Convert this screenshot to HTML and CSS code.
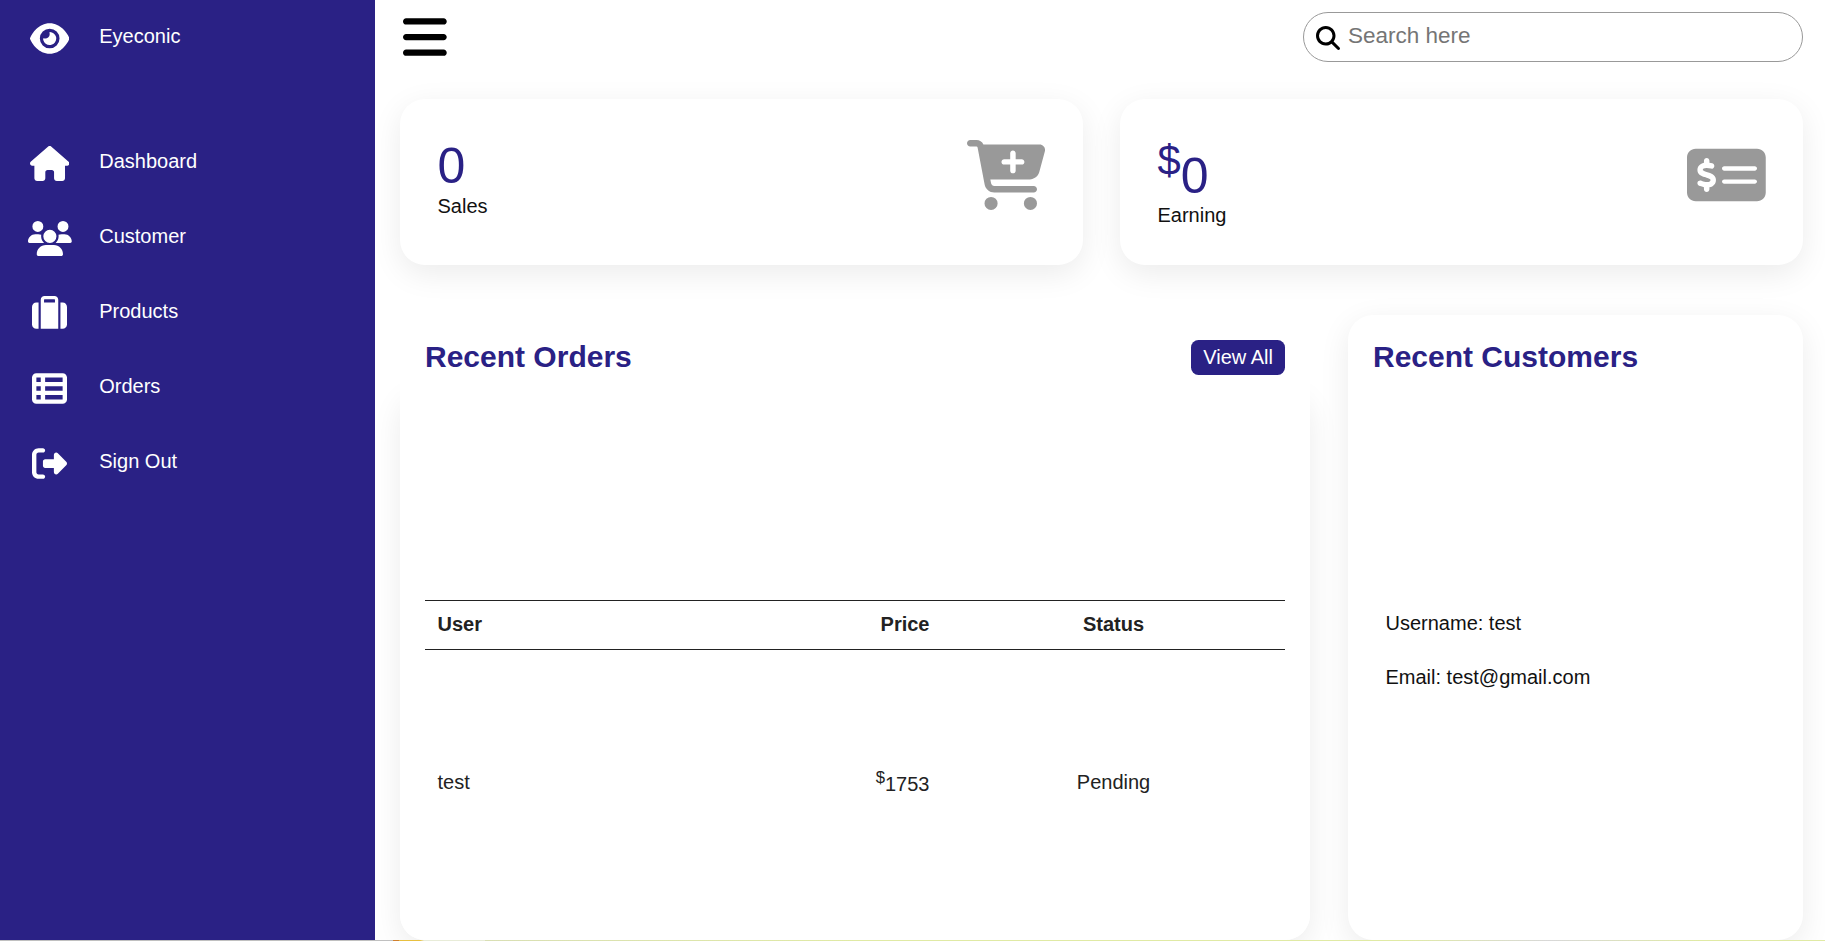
FILE: index.html
```
<!DOCTYPE html>
<html lang="en">
<head>
<meta charset="utf-8">
<title>Eyeconic</title>
<link rel="stylesheet" href="styles.css">
</head>
<body>
<div class="app">
  <nav class="sidebar">
    <a class="nav-item brand"><span class="nav-icon"><svg class="fa" viewBox="0 0 576 512" width="39.375" height="35"><path d="M288 32c-80.8 0-145.5 36.8-192.6 80.6C48.6 156 17.3 208 2.5 243.7c-3.3 7.9-3.3 16.7 0 24.6C17.3 304 48.6 356 95.4 399.4C142.5 443.2 207.2 480 288 480s145.5-36.8 192.6-80.6c46.8-43.5 78.1-95.4 93-131.1c3.3-7.9 3.3-16.7 0-24.6c-14.9-35.7-46.2-87.7-93-131.1C433.5 68.8 368.8 32 288 32zM144 256a144 144 0 1 1 288 0 144 144 0 1 1 -288 0zm144-64c0 35.3-28.7 64-64 64c-7.1 0-13.9-1.2-20.3-3.3c-5.5-1.8-11.9 1.6-11.7 7.4c.3 6.9 1.3 13.8 3.2 20.7c13.7 51.2 66.4 81.6 117.6 67.9s81.6-66.4 67.9-117.6c-11.1-41.5-47.8-69.4-88.6-71.1c-5.8-.2-9.2 6.1-7.4 11.7c2.1 6.4 3.3 13.2 3.3 20.3z"/></svg></span><span class="nav-title">Eyeconic</span></a>
    <a class="nav-item"><span class="nav-icon"><svg class="fa" viewBox="0 0 576 512" width="39.375" height="35"><path d="M575.8 255.5c0 18-15 32.1-32 32.1h-32l.7 160.2c0 2.7-.2 5.4-.5 8.1V472c0 22.1-17.9 40-40 40H456c-1.1 0-2.2 0-3.3-.1c-1.4 .1-2.8 .1-4.2 .1H416 392c-22.1 0-40-17.9-40-40V448 384c0-17.7-14.3-32-32-32H256c-17.7 0-32 14.3-32 32v64 24c0 22.1-17.9 40-40 40H160 128.1c-1.5 0-3-.1-4.5-.2c-1.2 .1-2.4 .2-3.6 .2H104c-22.1 0-40-17.9-40-40V360c0-.9 0-1.9 .1-2.8V287.6H32c-18 0-32-14-32-32.1c0-9 3-17 10-24L266.4 8c7-7 15-8 22-8s15 2 21 7L564.8 231.5c8 7 12 15 11 24z"/></svg></span><span class="nav-title">Dashboard</span></a>
    <a class="nav-item"><span class="nav-icon"><svg class="fa" viewBox="0 0 640 512" width="43.75" height="35"><path d="M144 0a80 80 0 1 1 0 160A80 80 0 1 1 144 0zM512 0a80 80 0 1 1 0 160A80 80 0 1 1 512 0zM0 298.7C0 239.8 47.8 192 106.7 192h42.7c15.9 0 31 3.5 44.6 9.7c-1.3 7.2-1.9 14.7-1.9 22.3c0 38.2 16.8 72.5 43.3 96c-.2 0-.4 0-.7 0H21.3C9.6 320 0 310.4 0 298.7zM405.3 320c-.2 0-.4 0-.7 0c26.6-23.5 43.3-57.8 43.3-96c0-7.6-.7-15-1.9-22.3c13.6-6.3 28.7-9.7 44.6-9.7h42.7C592.2 192 640 239.8 640 298.7c0 11.8-9.6 21.3-21.3 21.3H405.3zM224 224a96 96 0 1 1 192 0 96 96 0 1 1 -192 0zM128 485.3C128 411.7 187.7 352 261.3 352H378.7C452.3 352 512 411.7 512 485.3c0 14.7-11.9 26.7-26.7 26.7H154.7c-14.7 0-26.7-11.9-26.7-26.7z"/></svg></span><span class="nav-title">Customer</span></a>
    <a class="nav-item"><span class="nav-icon"><svg class="fa" viewBox="0 0 512 512" width="35" height="35"><path d="M176 56V96H336V56c0-4.4-3.6-8-8-8H184c-4.4 0-8 3.6-8 8zM128 96V56c0-30.9 25.1-56 56-56H328c30.9 0 56 25.1 56 56V96v32V480H128V128 96zM64 96H96V480H64c-35.3 0-64-28.7-64-64V160c0-35.3 28.7-64 64-64zM448 480H416V96h32c35.3 0 64 28.7 64 64V416c0 35.3-28.7 64-64 64z"/></svg></span><span class="nav-title">Products</span></a>
    <a class="nav-item"><span class="nav-icon"><svg class="fa" viewBox="0 0 512 512" width="35" height="35"><path d="M0 96C0 60.7 28.7 32 64 32H448c35.3 0 64 28.7 64 64V416c0 35.3-28.7 64-64 64H64c-35.3 0-64-28.7-64-64V96zm64 0v64h64V96H64zm384 0H192v64H448V96zM64 224v64h64V224H64zm384 0H192v64H448V224zM64 352v64h64V352H64zm384 0H192v64H448V352z"/></svg></span><span class="nav-title">Orders</span></a>
    <a class="nav-item"><span class="nav-icon"><svg class="fa" viewBox="0 0 512 512" width="35" height="35"><path d="M377.9 105.9L500.7 228.7c7.2 7.2 11.3 17.1 11.3 27.3s-4.1 20.1-11.3 27.3L377.9 406.1c-6.4 6.4-15 9.9-24 9.9c-18.7 0-33.9-15.2-33.9-33.9l0-62.1-128 0c-17.7 0-32-14.3-32-32l0-64c0-17.7 14.3-32 32-32l128 0 0-62.1c0-18.7 15.2-33.9 33.9-33.9c9 0 17.6 3.6 24 9.9zM160 96L96 96c-17.7 0-32 14.3-32 32l0 256c0 17.7 14.3 32 32 32l64 0c17.7 0 32 14.3 32 32s-14.3 32-32 32l-64 0c-53 0-96-43-96-96L0 128C0 75 43 32 96 32l64 0c17.7 0 32 14.3 32 32s-14.3 32-32 32z"/></svg></span><span class="nav-title">Sign Out</span></a>
  </nav>
  <main class="main">
    <header class="topbar">
      <span class="toggle"><svg class="fa" viewBox="0 0 448 512" width="43.75" height="50"><path d="M0 96C0 78.3 14.3 64 32 64H416c17.7 0 32 14.3 32 32s-14.3 32-32 32H32C14.3 128 0 113.7 0 96zM0 256c0-17.7 14.3-32 32-32H416c17.7 0 32 14.3 32 32s-14.3 32-32 32H32c-17.7 0-32-14.3-32-32zM448 416c0 17.7-14.3 32-32 32H32c-17.7 0-32-14.3-32-32s14.3-32 32-32H416c17.7 0 32 14.3 32 32z"/></svg></span>
      <label class="search"><svg class="fa" viewBox="0 0 512 512" width="24" height="24"><path d="M416 208c0 45.9-14.9 88.3-40 122.7L502.6 457.4c12.5 12.5 12.5 32.8 0 45.3s-32.8 12.5-45.3 0L330.7 376c-34.4 25.2-76.8 40-122.7 40C93.1 416 0 322.9 0 208S93.1 0 208 0S416 93.1 416 208zM208 352a144 144 0 1 0 0-288 144 144 0 1 0 0 288z"/></svg><input class="search-input" type="text" placeholder="Search here"></label>
    </header>
    <section class="cards">
      <div class="card">
        <div><div class="number">0</div><div class="card-name">Sales</div></div>
        <svg class="fa card-icon" viewBox="0 0 576 512" width="78.75" height="70"><path d="M0 24C0 10.7 10.7 0 24 0H69.5c22 0 41.5 12.8 50.6 32h411c26.3 0 45.5 25 38.6 50.4l-41 152.3c-8.5 31.4-37 53.3-69.5 53.3H170.7l5.4 28.5c2.2 11.3 12.1 19.5 23.6 19.5H488c13.3 0 24 10.7 24 24s-10.7 24-24 24H199.7c-34.6 0-64.3-24.6-70.7-58.5L77.4 54.5c-.7-3.8-4-6.5-7.9-6.5H24C10.7 48 0 37.3 0 24zM128 464a48 48 0 1 1 96 0 48 48 0 1 1 -96 0zm336-48a48 48 0 1 1 0 96 48 48 0 1 1 0-96zM252 160c0 11 9 20 20 20h44v44c0 11 9 20 20 20s20-9 20-20V180h44c11 0 20-9 20-20s-9-20-20-20H356V96c0-11-9-20-20-20s-20 9-20 20v44H272c-11 0-20 9-20 20z"/></svg>
      </div>
      <div class="card">
        <div><div class="number"><sup>$</sup>0</div><div class="card-name">Earning</div></div>
        <svg class="fa card-icon" viewBox="0 0 576 512" width="78.75" height="70"><path d="M64 64C28.7 64 0 92.7 0 128V384c0 35.3 28.7 64 64 64H512c35.3 0 64-28.7 64-64V128c0-35.3-28.7-64-64-64H64zM272 192H496c8.8 0 16 7.2 16 16s-7.2 16-16 16H272c-8.8 0-16-7.2-16-16s7.2-16 16-16zM256 304c0-8.8 7.2-16 16-16H496c8.8 0 16 7.2 16 16s-7.2 16-16 16H272c-8.8 0-16-7.2-16-16zM164 152v13.9c7.5 1.2 14.6 2.9 21.1 4.7c10.7 2.8 17 13.8 14.2 24.5s-13.8 17-24.5 14.2c-11-2.9-21.6-5-31.2-5.2c-7.9-.1-16 1.8-21.5 5c-4.8 2.8-6.2 5.6-6.2 9.3c0 1.8 .1 3.5 5.3 6.7c6.3 3.8 15.5 6.7 28.3 10.5l.7 .2c11.2 3.4 25.6 7.7 37.1 15c12.9 8.1 24.3 21.3 24.6 41.6c.3 20.9-10.5 36.1-24.8 45c-7.2 4.5-15.2 7.3-23.2 9V360c0 11-9 20-20 20s-20-9-20-20V345.4c-10.3-2.2-20-5.5-28.2-8.4c-2.1-.7-4.1-1.4-6.1-2.1c-10.5-3.5-16.1-14.8-12.6-25.3s14.8-16.1 25.3-12.6c2.5 .8 4.9 1.7 7.2 2.4c13.6 4.6 24 8.1 35.1 8.5c8.6 .3 16.5-1.6 21.4-4.7c4.1-2.5 6-5.5 5.9-10.5c0-2.9-.8-5-5.9-8.2c-6.3-4-15.4-6.9-28-10.7l-1.7-.5c-10.9-3.3-24.6-7.4-35.6-14c-12.7-7.7-24.6-20.5-24.7-40.7c-.1-21.1 11.8-35.7 25.8-43.9c6.9-4.1 14.5-6.8 22.2-8.5V152c0-11 9-20 20-20s20 9 20 20z"/></svg>
      </div>
    </section>
    <section class="details">
      <div class="orders">
        <div class="panel-head"><h2 class="panel-title">Recent Orders</h2><a class="btn">View All</a></div>
        <table class="orders-table">
          <thead><tr><th class="col-user">User</th><th class="col-price">Price</th><th class="col-status">Status</th></tr></thead>
          <tbody><tr><td class="col-user">test</td><td class="col-price amount"><sup>$</sup>1753</td><td class="col-status">Pending</td></tr></tbody>
        </table>
      </div>
      <div class="customers">
        <h2 class="panel-title">Recent Customers</h2>
        <div class="customer">
          <p class="customer-line">Username: test</p>
          <p class="customer-line">Email: test@gmail.com</p>
        </div>
      </div>
    </section>
  </main>
</div>
<div class="edge"></div>
</body>
</html>
```
FILE: styles.css
```
* { box-sizing: border-box; margin: 0; padding: 0; }
body { font: 20px/23px "Liberation Sans", Arial, sans-serif; background: #fff; color: #111; height: 941px; overflow: hidden; }
.app { display: flex; height: 940px; overflow: hidden; }
.fa { display: block; flex: none; fill: currentColor; }

.sidebar { width: 375px; flex: none; background: #2a2185; color: #fff; }
.nav-item { display: flex; height: 75px; padding-top: 1px; }
.brand { margin-bottom: 50px; }
.nav-icon { width: 99.25px; height: 75px; display: flex; align-items: center; justify-content: center; }
.nav-title { line-height: 70px; }

.main { flex: 1; padding: 0 22px 0 25px; position: relative; z-index: 0; }
.topbar { display: flex; align-items: center; justify-content: space-between; height: 74px; padding-left: 3px; }
.toggle { color: #000; }
.search { display: flex; align-items: center; gap: 8px; width: 500px; height: 50px; padding: 1px 12px 0; border: 1px solid #999; border-radius: 25px; color: #000; }
.search-input { flex: 1; border: 0; outline: 0; background: none; font: 22.5px "Liberation Sans", Arial, sans-serif; padding-bottom: 4px; }
.search-input::placeholder { color: #757575; }

.cards { display: grid; grid-template-columns: 1fr 1fr; gap: 37px; padding-top: 25px; }
.card { display: flex; justify-content: space-between; height: 166px; padding: 37.5px; background: #fff; border-radius: 25px; box-shadow: 0 8.75px 31.25px rgba(0, 0, 0, .08); }
.number { font-size: 50px; line-height: normal; color: #2a2185; }
.card-name { color: #111; }
.card-icon { color: #999; margin-top: 3px; }

.details { display: grid; grid-template-columns: 910px 455px; justify-content: space-between; height: 625px; margin-top: 50px; }
.orders { position: relative; padding: 25px; background: #fff; border-radius: 25px; color: #222; }
/* Shadow covers only the table area, below the panel heading. */
.orders::before { content: ""; position: absolute; inset: 75px 0 0; z-index: -1; border-radius: 25px; box-shadow: 0 8.75px 31.25px rgba(0, 0, 0, .08); }
.panel-head { display: flex; justify-content: space-between; align-items: flex-start; height: 35px; }
.panel-title { font-size: 30px; line-height: 34px; color: #2a2185; }
.btn { padding: 6px 12px; height: 35px; background: #2a2185; color: #fff; border-radius: 7.5px; }
.orders-table { width: 860px; height: 315px; margin-top: 225px; border-collapse: collapse; table-layout: fixed; }
.orders-table th { height: 49px; border-top: 1px solid #222; border-bottom: 1px solid #222; padding: 0 12.5px 1px; }
.orders-table td { padding: 0 12.5px; }
.orders-table .amount { padding-top: 4px; }
.amount sup { line-height: 0; }
.orders-table .col-user { width: 258px; text-align: left; }
.orders-table .col-price { width: 259px; text-align: right; }
.orders-table .col-status { width: 343px; text-align: center; }

.customers { padding: 25px; background: #fff; border-radius: 25px; box-shadow: 0 8.75px 31.25px rgba(0, 0, 0, .08); }
.customer { display: grid; gap: 31px; padding: 238px 12.5px 0; }

.edge { height: 1px; background: linear-gradient(to right, #c0c0c0 393px, #d08030 393px 399px, #e8c040 399px 420px, #e8ecd8 424px 485px, #d9dfb4 485px, #e0eaa4 860px 1200px, #e0eaa4 1400px, #d8d8d8 1550px, #e0eaa4 1700px); }
```
